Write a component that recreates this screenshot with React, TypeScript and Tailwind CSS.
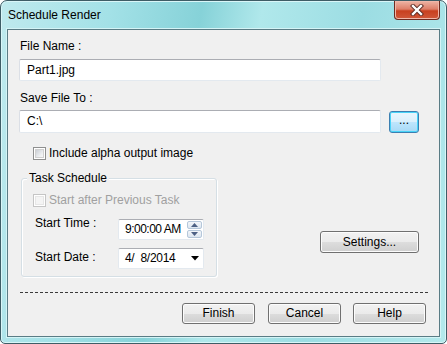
import React from 'react';

// Windows 7 styled "Schedule Render" dialog

const font = "font-['Liberation_Sans',Arial,sans-serif]";

function CheckBox({ disabled }: { disabled?: boolean }) {
  return (
    <span
      className={`flex h-[13px] w-[13px] shrink-0 items-center justify-center border ${
        disabled ? 'border-[#c5c5c5]' : 'border-[#8e8f8f]'
      } bg-white`}
    >
      <span
        className={`h-[9px] w-[9px] border ${
          disabled
            ? 'border-[#e6e6e6] bg-[#f4f4f4]'
            : 'border-[#d0d0d0] bg-[linear-gradient(135deg,#cbcfd5_0%,#eef0f2_70%,#f7f7f7_100%)]'
        }`}
      />
    </span>
  );
}

function TextBox({ value, className }: { value: string; className: string }) {
  return (
    <div
      className={`flex items-center rounded-[2px] border border-[#e3e9ef] border-t-[#abadb3] border-l-[#dbdfe6] bg-white pl-[7px] text-[12px] ${className}`}
    >
      {value}
    </div>
  );
}

function PushButton({ label, className }: { label: string; className: string }) {
  return (
    <button
      className={`flex items-center justify-center rounded-[3px] border border-[#707070] bg-[linear-gradient(180deg,#f2f2f2_0%,#ebebeb_50%,#dddddd_51%,#cfcfcf_100%)] text-[12px] text-black shadow-[inset_0_0_0_1px_#fcfcfc] ${className}`}
    >
      {label}
    </button>
  );
}

export default function App() {
  return (
    <div className={`${font} h-[344px] w-[447px] bg-white text-black`}>
      <div className="flex h-[344px] w-[447px] flex-col rounded-t-[7px] rounded-b-[5px] border border-[#3e5d66] bg-[linear-gradient(100deg,#bfeaee_0%,#a3e1e7_22%,#86d2d8_40%,#b0e8eb_52%,#9cdde3_72%,#b4e9ec_100%)] shadow-[inset_0_0_0_1px_#d9f6f8]">
        {/* title bar */}
        <div className="flex h-[28px] shrink-0 items-start">
          <span className="ml-[7px] mt-[7px] text-[12px] leading-[15px] text-black">Schedule Render</span>
          <div className="ml-auto mr-[6px] flex h-[19px] w-[46px] items-center justify-center rounded-b-[4px] border border-t-0 border-[#6e2b20] bg-[linear-gradient(180deg,#eeb4a5_0%,#de7f69_45%,#c8401f_55%,#d0583a_100%)] shadow-[inset_0_0_0_1px_#f0b7a9]">
            <svg width="14" height="12" viewBox="0 0 14 12">
              <path d="M3 2 L11 10 M11 2 L3 10" stroke="#5b2a22" strokeWidth="4.2" strokeLinecap="square" />
              <path d="M3 2 L11 10 M11 2 L3 10" stroke="#ffffff" strokeWidth="2.4" strokeLinecap="square" />
            </svg>
          </div>
        </div>

        {/* client area */}
        <div className="mx-[6px] mb-[6px] flex flex-1 flex-col border border-[#5a7c85] bg-[#f0f0f0] pl-[11px] text-[12px] leading-[15px] shadow-[0_0_0_1px_#d4f4f6]">
          <div className="mt-[9px] h-[15px] pl-[1px]">File Name :</div>
          <TextBox value="Part1.jpg" className="mt-[5px] h-[22px] w-[362px]" />

          <div className="mt-[10px] h-[15px] pl-[1px]">Save File To :</div>
          <div className="mt-[4px] flex items-center gap-[8px]">
            <TextBox value="C:\" className="h-[23px] w-[362px]" />
            <button className="flex h-[22px] w-[30px] items-center justify-center rounded-[3px] border border-[#3c7fb1] bg-[linear-gradient(180deg,#eaf6fd_0%,#d9f0fc_50%,#bee6fd_51%,#a7d9f5_100%)] pb-[3px] text-[12px] text-black shadow-[inset_0_0_0_1px_#48d4f8]">
              ...
            </button>
          </div>

          <div className="ml-[14px] mt-[12px] flex h-[16px] items-center gap-[2px]">
            <CheckBox />
            <span className="ml-[1px]">Include alpha output image</span>
          </div>

          <div className="flex items-end">
            <div className="relative ml-[2px] mt-[17px] flex w-[196px] flex-col rounded-[3px] border border-[#d5dfe5] pb-[7px] pl-[11px] shadow-[inset_1px_1px_0_#ffffff,1px_1px_0_#ffffff]">
              <span className="absolute -top-[8px] left-[5px] bg-[#f0f0f0] px-[2px] leading-[15px]">Task Schedule</span>
              <div className="mt-[13px] flex h-[16px] items-center gap-[3px] text-[#a0a0a0]">
                <CheckBox disabled />
                <span>Start after Previous Task</span>
              </div>
              <div className="mt-[8px] flex items-start pl-[2px]">
                <span className="w-[83px] leading-[15px]">Start Time :</span>
                <div className="mt-[3px] flex h-[21px] w-[86px] items-center justify-between rounded-[2px] border border-[#e3e9ef] border-t-[#abadb3] bg-white pl-[6px] pr-[1px]">
                  <span className="tracking-[-0.5px]">9:00:00 AM</span>
                  <div className="flex h-[17px] w-[15px] flex-col gap-[1px]">
                    <div className="flex flex-1 items-center justify-center rounded-[2px] border border-[#b5c7da] bg-[linear-gradient(180deg,#f3f6fa,#dce6f0)]">
                      <svg width="7" height="4" viewBox="0 0 7 4"><path d="M0 4 L3.5 0 L7 4 Z" fill="#4d6185" /></svg>
                    </div>
                    <div className="flex flex-1 items-center justify-center rounded-[2px] border border-[#b5c7da] bg-[linear-gradient(180deg,#f3f6fa,#dce6f0)]">
                      <svg width="7" height="4" viewBox="0 0 7 4"><path d="M0 0 L7 0 L3.5 4 Z" fill="#4d6185" /></svg>
                    </div>
                  </div>
                </div>
              </div>
              <div className="mt-[8px] flex items-start pl-[2px]">
                <span className="mt-[2px] w-[83px] leading-[15px]">Start Date :</span>
                <div className="flex h-[21px] w-[86px] items-center justify-between rounded-[2px] border border-[#e3e9ef] border-t-[#abadb3] bg-white pl-[6px] pr-[4px]">
                  <span className="whitespace-pre tracking-[-0.3px]">4/  8/2014</span>
                  <svg width="8" height="5" viewBox="0 0 8 5"><path d="M0 0 L8 0 L4 4.5 Z" fill="#000000" /></svg>
                </div>
              </div>
            </div>
            <PushButton label="Settings..." className="mb-[24px] ml-[103px] h-[22px] w-[99px]" />
          </div>

          <div className="ml-[1px] mt-[15px] h-[1px] w-[408px] bg-[repeating-linear-gradient(90deg,#3a3a3a_0px,#3a3a3a_3px,transparent_3px,transparent_5px)]" />

          <div className="mt-[10px] flex w-[408px] justify-end pr-[1px]">
            <PushButton label="Finish" className="h-[21px] w-[73px]" />
            <PushButton label="Cancel" className="ml-[13px] h-[21px] w-[73px]" />
            <PushButton label="Help" className="ml-[12px] h-[21px] w-[73px]" />
          </div>
        </div>
      </div>
    </div>
  );
}
